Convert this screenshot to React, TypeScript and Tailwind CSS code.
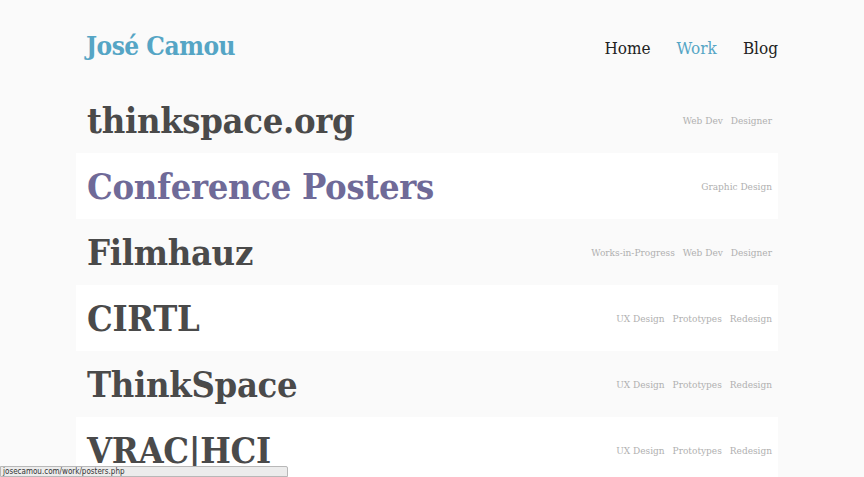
const projects = [
  { title: 'thinkspace.org', tags: ['Web Dev', 'Designer'] },
  { title: 'Conference Posters', tags: ['Graphic Design'], active: true },
  { title: 'Filmhauz', tags: ['Works-in-Progress', 'Web Dev', 'Designer'] },
  { title: 'CIRTL', tags: ['UX Design', 'Prototypes', 'Redesign'] },
  { title: 'ThinkSpace', tags: ['UX Design', 'Prototypes', 'Redesign'] },
  { title: 'VRAC|HCI', tags: ['UX Design', 'Prototypes', 'Redesign'] },
]

export default function App() {
  return (
    <div className="relative h-[477px] overflow-hidden bg-[#fafafa] font-['DejaVu_Serif_Condensed','DejaVu_Serif',serif] font-stretch-condensed">
      <div className="ml-[76px] w-[702px]">
        {/* Header */}
        <header className="flex h-[87px] items-center justify-between pl-[10px] pt-[6px]">
          <a className="text-[26px] font-bold tracking-[-0.5px] text-[#55a5c5]">José Camou</a>
          <nav className="flex gap-[26px] pt-[4px] text-[17px] text-[#222]">
            <a>Home</a>
            <a className="text-[#55a5c5]">Work</a>
            <a>Blog</a>
          </nav>
        </header>

        {/* Projects */}
        <ul>
          {projects.map((p, i) => (
            <li
              key={p.title}
              className={`flex h-[66px] items-center justify-between pl-[11px] pr-[6px] ${i % 2 === 1 ? 'bg-white' : ''}`}
            >
              <span
                className={`text-[36px] font-bold leading-none tracking-[-0.3px] ${p.active ? 'text-[#6f6a98]' : 'text-[#4a4a4a]'}`}
              >
                {p.title}
              </span>
              <span className="flex gap-[8px] text-[10px] text-[#b0b0b0]">
                {p.tags.map((t) => (
                  <span key={t}>{t}</span>
                ))}
              </span>
            </li>
          ))}
        </ul>
      </div>

      {/* browser status bar */}
      <div className="absolute bottom-0 left-0 h-[11px] w-[288px] rounded-tr-[2px] border border-[#b8b8b8] bg-[#ececec] pl-[2px] font-['DejaVu_Sans',sans-serif] text-[8px] leading-[9px] text-[#333]">
        josecamou.com/work/posters.php
      </div>
    </div>
  )
}
